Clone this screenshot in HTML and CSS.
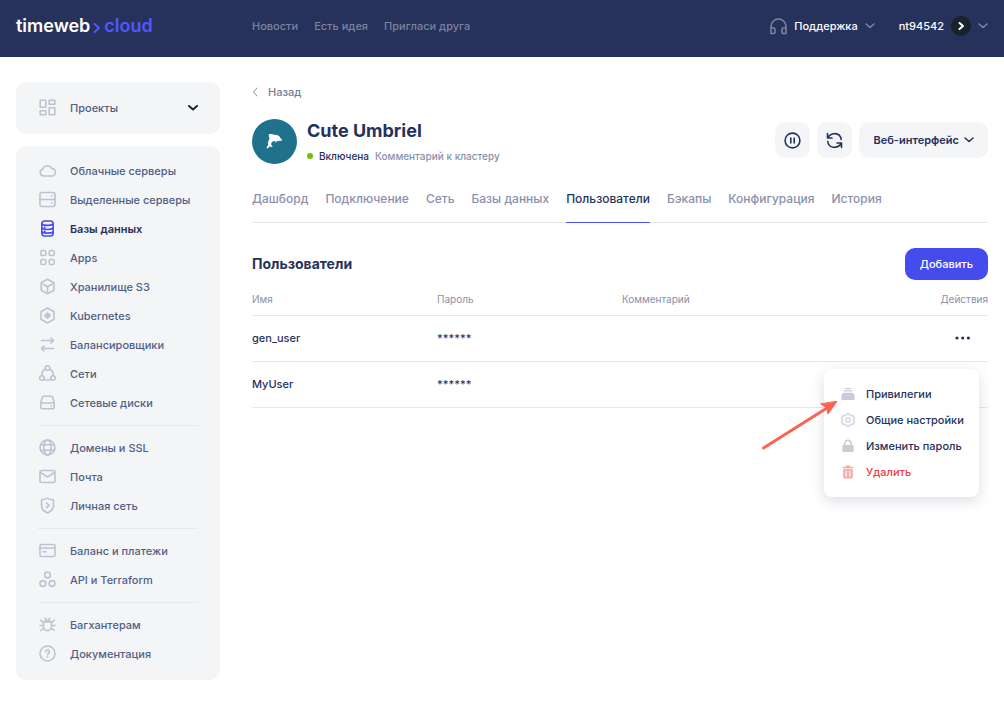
FILE: index.html
```html
<!DOCTYPE html>
<html lang="ru">
<head>
<meta charset="utf-8">
<meta name="viewport" content="width=device-width, initial-scale=1">
<title>Cute Umbriel — Пользователи</title>
<link rel="stylesheet" href="styles.css">
</head>
<body>
<header class="topbar">
  <a class="logo" href="#" aria-label="timeweb cloud"><span>timeweb</span><svg class="logo-mark" viewBox="0 0 8 12"><path d="M1.500 2l4.500 4-4.500 4"/></svg><span class="logo-accent">cloud</span></a>
  <nav class="topnav">
    <a href="#">Новости</a>
    <a href="#">Есть идея</a>
    <a href="#">Пригласи друга</a>
  </nav>
  <div class="account">
    <button class="top-button" type="button">
      <svg class="icon icon-dim" viewBox="0 0 17 17"><path d="M1 15.500V8.500a7.500 7.500 0 0 1 15 0v7M1 15.500h2.500a1.500 1.500 0 0 0 1.500-1.500v-2.500a1.500 1.500 0 0 0-1.500-1.500H1M16 15.500h-2.500a1.500 1.500 0 0 1-1.500-1.500v-2.500a1.500 1.500 0 0 1 1.500-1.500H16"/></svg>
      <span>Поддержка</span>
      <svg class="chevron icon-dim" viewBox="0 0 10 6"><path d="M1 1l4 3.500 4-3.500"/></svg>
    </button>
    <button class="top-button" type="button">
      <span>nt94542</span>
      <span class="avatar"><svg viewBox="0 0 20 20"><path d="M8.500 7l3.500 3-3.500 3"/></svg></span>
      <svg class="chevron icon-dim" viewBox="0 0 10 6"><path d="M1 1l4 3.500 4-3.500"/></svg>
    </button>
  </div>
</header>

<div class="layout">
  <aside class="sidebar">
    <button class="projects" type="button">
      <svg class="icon" viewBox="0 0 17 17"><path d="M1.200 1.200h5.600v7H1.200zM10.200 1.200h5.600v4h-5.600zM1.200 11.800h5.600v4H1.200zM10.200 8.800h5.600v7h-5.600z"/></svg>
      <span>Проекты</span>
      <svg class="chevron chevron-dark" viewBox="0 0 10 6"><path d="M1 1l4 3.500 4-3.500"/></svg>
    </button>
    <nav class="menu">
      <ul>
        <li><a href="#"><svg class="icon" viewBox="0 0 17 17"><path d="M4.500 14a3.400 3.400 0 0 1-.7-6.700 4.700 4.700 0 0 1 8.900-.7 3.700 3.700 0 0 1 .1 7.400z"/></svg>Облачные серверы</a></li>
        <li><a href="#"><svg class="icon" viewBox="0 0 17 17"><rect x="1" y="1.500" width="15" height="14" rx="2"/><path d="M1 8.500h15M12.500 5h.5M12.500 12h.5"/></svg>Выделенные серверы</a></li>
        <li><a class="active" href="#" aria-current="page"><svg class="icon" viewBox="0 0 17 17"><rect x="2.800" y="1" width="11.400" height="15" rx="3"/><path d="M2.800 4.200c2.500 1.500 9 1.500 11.400 0M2.800 8.300c2.500 1.500 9 1.500 11.400 0M2.800 12c2.500 1.500 9 1.500 11.400 0M5.500 7.300h.5M5.500 11.200h.5"/></svg>Базы данных</a></li>
        <li><a href="#"><svg class="icon" viewBox="0 0 17 17"><rect x="1.800" y="1.500" width="5" height="5" rx="1.500"/><rect x="10.200" y="1.500" width="5" height="5" rx="1.500"/><rect x="1.800" y="10.500" width="5" height="5" rx="1.500"/><rect x="10.200" y="10.500" width="5" height="5" rx="1.500"/></svg>Apps</a></li>
        <li><a href="#"><svg class="icon" viewBox="0 0 17 17"><path d="M8.500 1.200l6.300 3.500v7.600l-6.300 3.500-6.300-3.500V4.700zM4 6.200l4.500 2.500L13 6.200M8.500 8.700v5"/></svg>Хранилище S3</a></li>
        <li><a href="#"><svg class="icon" viewBox="0 0 17 17"><path d="M8.500 1l6.500 3.700v7.600L8.500 16 2 12.300V4.700z"/><path class="solid" d="M8.500 4.500l1.200 1.900 1.600-.2-.2 1.500 1.400.8-1.400.8.2 1.500-1.600-.2-1.200 1.900-1.200-1.900-1.600.2.200-1.500-1.400-.8 1.400-.8-.2-1.500 1.600.2z"/></svg>Kubernetes</a></li>
        <li><a href="#"><svg class="icon" viewBox="0 0 17 17"><path d="M2.500 4.500h12M12 2l2.500 2.500L12 7M14.500 12.500h-12M5 10l-2.500 2.500L5 15"/></svg>Балансировщики</a></li>
        <li><a href="#"><svg class="icon" viewBox="0 0 17 17"><circle cx="8.500" cy="3" r="2.300"/><circle cx="2.900" cy="13" r="2.300"/><circle cx="14.100" cy="13" r="2.300"/><path d="M6.300 4C4 5.200 2.800 7.500 2.700 10.500M10.700 4c2.300 1.200 3.500 3.500 3.600 6.500M5.200 14.200c2 1.300 4.600 1.300 6.600 0"/></svg>Сети</a></li>
        <li><a href="#"><svg class="icon" viewBox="0 0 17 17"><path d="M1.800 9l1.400-5.500c.2-.8.800-1.200 1.600-1.200h7.400c.8 0 1.400.4 1.600 1.200L15.200 9v4c0 1-.7 1.700-1.700 1.700h-10c-1 0-1.700-.7-1.700-1.700zM1.800 9h13.400M12 11.900h.5"/></svg>Сетевые диски</a></li>
      </ul>
      <ul>
        <li><a href="#"><svg class="icon" viewBox="0 0 17 17"><circle cx="8.500" cy="8.500" r="7.500"/><ellipse cx="8.500" cy="8.500" rx="3.700" ry="7.500"/><path d="M1.800 5.800h13.400M1.800 11.200h13.400"/></svg>Домены и SSL</a></li>
        <li><a href="#"><svg class="icon" viewBox="0 0 17 17"><rect x="1" y="2.500" width="15" height="12" rx="1.500"/><path d="M1.500 4.500l7 4.500 7-4.500"/></svg>Почта</a></li>
        <li><a href="#"><svg class="icon" viewBox="0 0 17 17"><path d="M8.500 1c1.500 1.200 3.700 1.700 6 1.700v6c0 3.300-2.500 5.800-6 7.300-3.500-1.500-6-4-6-7.300v-6c2.300 0 4.500-.5 6-1.700zM7.500 6l2.500 2.300-2.500 2.300"/></svg>Личная сеть</a></li>
      </ul>
      <ul>
        <li><a href="#"><svg class="icon" viewBox="0 0 17 17"><rect x="1" y="2.500" width="15" height="12" rx="1.500"/><path d="M1 6h15M4 9.800h3"/></svg>Баланс и платежи</a></li>
        <li><a href="#"><svg class="icon" viewBox="0 0 17 17"><circle cx="8.500" cy="4" r="2.900"/><circle cx="3.900" cy="12.500" r="2.900"/><circle cx="13.100" cy="12.500" r="2.900"/></svg>API и Terraform</a></li>
      </ul>
      <ul>
        <li><a href="#"><svg class="icon" viewBox="0 0 17 17"><path d="M4.500 6h8v4.500a4 4 0 0 1-8 0zM6 6a2.500 2 0 0 1 5 0M6.200 2l.8 2M10.800 2L10 4M4.500 7L1.800 4M12.500 7l2.700-3M4.500 9.500H1M12.500 9.500H16M4.800 12l-3 2.500M12.200 12l3 2.500"/></svg>Багхантерам</a></li>
        <li><a href="#"><svg class="icon" viewBox="0 0 17 17"><circle cx="8.500" cy="8.500" r="7.500"/><path d="M6.600 7a1.900 1.900 0 1 1 2.700 1.700c-.6.300-.8.500-.8 1.100M8.500 11.800v.4"/></svg>Документация</a></li>
      </ul>
    </nav>
  </aside>

  <main class="content">
    <a class="back" href="#"><svg viewBox="0 0 6 10"><path d="M5 1L1.500 5 5 9"/></svg>Назад</a>

    <div class="cluster">
      <svg class="cluster-logo" viewBox="0 0 45 45"><circle cx="22.500" cy="22.500" r="22.500"/><path class="dolphin" d="M17 15.200c2-.3 4 0 5 .6 3.500-.3 5.700 1.200 6.500 3.400l1.600 1.600c.2.700-.4 1-1.200 1l-3.600.1-1.700 1.800-.4-1.700c-2.200 0-3.700.8-4 2.500-.1 1 .1 1.600.6 2.100l.9 1.300c-1.200.3-2.200.1-2.900-.6-.7 1.300-1.700 2-3.200 2.300 0-1.500.6-2.500 1.600-3.300-.5-2.300 0-4.600 1.500-6.700-.9-1.100-1.200-2.500-.7-4.400z"/></svg>
      <div class="cluster-info">
        <h1>Cute Umbriel</h1>
        <p class="status"><span class="dot"></span><span class="state">Включена</span><span>Комментарий к кластеру</span></p>
      </div>
      <div class="cluster-actions">
        <button class="soft square" type="button" aria-label="Приостановить"><svg class="icon" viewBox="0 0 17 17"><circle cx="8.500" cy="8.500" r="7.400"/><path d="M6.800 6v5M10.200 6v5"/></svg></button>
        <button class="soft square" type="button" aria-label="Перезагрузить"><svg class="icon" viewBox="0 0 17 17"><path d="M1.500 1.500v4.500H6M2 5.500C4.500.8 12 .2 14.500 5c.4.700.6 1.500.7 2.500M15.500 15.500V11H11M15 11.500c-2.500 4.700-10 5.300-12.500.5-.4-.7-.6-1.500-.7-2.500"/></svg></button>
        <button class="soft" type="button">Веб-интерфейс<svg class="chevron" viewBox="0 0 10 6"><path d="M1 1l4 3.500 4-3.500"/></svg></button>
      </div>
    </div>

    <nav class="tabs">
      <a href="#">Дашборд</a>
      <a href="#">Подключение</a>
      <a href="#">Сеть</a>
      <a href="#">Базы данных</a>
      <a class="active" href="#" aria-current="page">Пользователи</a>
      <a href="#">Бэкапы</a>
      <a href="#">Конфигурация</a>
      <a href="#">История</a>
    </nav>

    <div class="section-head">
      <h2>Пользователи</h2>
      <button class="primary" type="button">Добавить</button>
    </div>

    <table class="users">
      <thead>
        <tr><th class="col-name">Имя</th><th class="col-password">Пароль</th><th>Комментарий</th><th class="col-actions">Действия</th></tr>
      </thead>
      <tbody>
        <tr>
          <td>gen_user</td><td>******</td><td></td>
          <td class="col-actions">
            <div class="row-actions">
              <button class="more" type="button" aria-label="Действия" aria-expanded="true"><svg viewBox="0 0 16 4"><circle cx="2" cy="2" r="1.600"/><circle cx="7.700" cy="2" r="1.600"/><circle cx="13.400" cy="2" r="1.600"/></svg></button>
              <div class="dropdown">
                <button type="button"><svg viewBox="0 0 14 14"><path d="M4 1h6v1.200H4zM2.500 3.300h9v1.200h-9zM2.300 5.700h9.400L13.500 8v4c0 .6-.4 1-1 1h-11c-.6 0-1-.4-1-1V8z"/></svg>Привилегии</button>
                <button type="button"><svg class="line" viewBox="0 0 14 14"><path d="M5.500.8h3l.6 1.500 1.300.7 1.600-.3 1.500 2.600-1 1.200v1l1 1.200-1.500 2.600-1.600-.3-1.300.7-.6 1.500h-3l-.6-1.500-1.300-.7-1.600.3L.5 8.700l1-1.200v-1l-1-1.200L2 2.700l1.600.3 1.300-.7z"/><circle cx="7" cy="7" r="2.200"/></svg>Общие настройки</button>
                <button type="button"><svg viewBox="0 0 14 14"><path d="M3 6V4.500a4 4 0 0 1 8 0V6h.3c.8 0 1.400.6 1.400 1.400v4.200c0 .8-.6 1.400-1.400 1.400H2.700c-.8 0-1.400-.6-1.400-1.400V7.400C1.300 6.600 1.900 6 2.700 6zm1.500 0h5V4.500a2.500 2.500 0 0 0-5 0z"/></svg>Изменить пароль</button>
                <button class="danger" type="button"><svg viewBox="0 0 14 14"><path fill-rule="evenodd" d="M5.500.500h3l.8 1.200h3v1.600H1.700V1.700h3zM2.200 4h9.600v8c0 .9-.6 1.500-1.500 1.500H3.700c-.9 0-1.500-.6-1.500-1.500zM4.500 5.300v6.500h1.200V5.300zM8.300 5.300v6.500h1.200V5.300z"/></svg>Удалить</button>
              </div>
              <svg class="pointer" viewBox="0 0 76 50"><path class="shaft" d="M2.500 48L66 8"/><path class="head" d="M76 1.500L67 14 65.500 8 60 4z"/></svg>
            </div>
          </td>
        </tr>
        <tr><td>MyUser</td><td>******</td><td></td><td></td></tr>
      </tbody>
    </table>
  </main>
</div>
</body>
</html>
```
FILE: styles.css
```css
:root {
  --navy: #26325b;
  --slate: #515f85;
  --muted: #8a90aa;
  --icon: #bfc2d1;
  --soft: #f4f5f7;
  --line: #e7e8ee;
  --blue: #444cee;
}

* { box-sizing: border-box; }

body {
  margin: 0;
  background: #fff;
  color: var(--navy);
  font: 500 11px/16px Inter, "Noto Sans", sans-serif;
}

a { color: inherit; text-decoration: none; }

button {
  border: 0;
  padding: 0;
  background: none;
  color: inherit;
  font: inherit;
  cursor: pointer;
}

svg {
  flex: none;
  fill: none;
  stroke: currentColor;
  stroke-linecap: round;
  stroke-linejoin: round;
}

ul { margin: 0; padding: 0; list-style: none; }
h1, h2, p { margin: 0; }

.icon { width: 17px; height: 17px; stroke-width: 1.6; }
.chevron { width: 10px; height: 6px; stroke-width: 1.6; }
.solid { fill: currentColor; stroke: none; }

.topbar {
  display: flex;
  align-items: center;
  height: 57px;
  padding: 0 16px 5px;
  background: var(--navy);
  color: #fff;
}

.logo {
  display: flex;
  align-items: center;
  width: 236px;
  font-size: 18px;
  font-weight: 600;
  line-height: 24px;
}
.logo-mark { width: 8px; height: 12px; margin: 3px 3px 0; stroke: #5157ff; stroke-width: 2; }
.logo-accent { color: #5157ff; }

.topnav { display: flex; gap: 16px; color: #7c839d; }

.account { display: flex; gap: 24px; margin-left: auto; }
.top-button { display: flex; align-items: center; gap: 7px; }
.icon-dim { color: #7c839d; }
.avatar { display: flex; width: 20px; height: 20px; border-radius: 50%; background: #18222d; }
.avatar svg { width: 20px; height: 20px; stroke-width: 2; }

.layout { display: flex; gap: 32px; padding: 25px 16px; }

.sidebar { flex: none; width: 204px; color: var(--slate); }
.sidebar .icon { color: var(--icon); }

.projects {
  display: flex;
  align-items: center;
  gap: 14px;
  width: 100%;
  padding: 17px 22px 18px 23px;
  border-radius: 10px;
  background: var(--soft);
}
.sidebar .chevron-dark { margin-left: auto; color: #22252e; stroke-width: 2; }

.menu { margin-top: 12px; padding: 10px 22px 12px; border-radius: 10px; background: var(--soft); }
.menu ul + ul { margin-top: 8px; padding-top: 7px; border-top: 1px solid var(--line); }
.menu a { display: flex; align-items: center; gap: 14px; padding: 6px 0 6px 1px; white-space: nowrap; }
.menu .active { color: var(--navy); font-weight: 600; }
.menu .active .icon { color: var(--blue); }

.content { flex: 1; min-width: 0; }

.back { display: flex; align-items: center; gap: 10px; padding-top: 2px; color: #747d9a; }
.back svg { width: 6px; height: 10px; color: var(--muted); }

.cluster { display: flex; align-items: center; gap: 10px; margin-top: 19px; }
.cluster-logo { width: 45px; height: 45px; stroke: none; fill: #20718c; }
.dolphin { fill: #fff; }
.cluster h1 { font-size: 18px; font-weight: 700; line-height: 24px; }
.status { display: flex; align-items: center; gap: 6px; margin-top: 5px; color: var(--muted); font-size: 10px; }
.state { color: var(--navy); }
.dot { width: 6px; height: 6px; border-radius: 50%; background: #6cc20b; }

.cluster-actions { display: flex; gap: 7px; margin-left: auto; padding-bottom: 3px; }
.soft {
  display: flex;
  align-items: center;
  justify-content: center;
  gap: 5px;
  height: 36px;
  padding: 0 14px;
  border-radius: 10px;
  background: var(--soft);
  font-weight: 600;
}
.square { width: 35px; padding: 0; }

.tabs {
  display: flex;
  gap: 17px;
  margin-top: 25px;
  border-bottom: 1px solid var(--line);
  color: var(--muted);
  font-size: 12px;
}
.tabs a { margin-bottom: -1px; padding: 2px 0 15px; border-bottom: 1px solid transparent; }
.tabs .active { border-color: var(--blue); color: var(--navy); }

.section-head { display: flex; align-items: center; justify-content: space-between; margin-top: 25px; }
.section-head h2 { font-size: 14px; font-weight: 700; line-height: 20px; }
.primary { height: 32px; padding: 0 15px; border-radius: 10px; background: var(--blue); color: #fff; }

.users { width: 100%; margin-top: 3px; border-collapse: collapse; table-layout: fixed; }
.users th { height: 32px; padding: 0; color: var(--muted); font-size: 10px; font-weight: 400; text-align: left; }
.users td { height: 46px; padding: 0; }
.users tr { border-bottom: 1px solid var(--line); }
.users .col-name, .users .col-password { width: 185px; }
.users .col-actions { text-align: right; }

.row-actions { position: relative; display: flex; justify-content: flex-end; padding-right: 17px; }
.more { display: flex; align-items: center; height: 16px; }
.more svg { width: 16px; height: 4px; fill: currentColor; stroke: none; }

.dropdown {
  position: absolute;
  z-index: 1;
  top: 39px;
  right: 9px;
  width: 155px;
  padding: 12px 0;
  border-radius: 8px;
  background: #fff;
  box-shadow: 0 4px 14px rgb(38 50 91 / 16%);
}
.dropdown button { display: flex; align-items: center; gap: 11px; width: 100%; padding: 5px 17px; white-space: nowrap; }
.dropdown svg { width: 14px; height: 14px; fill: #c9ccd9; stroke: none; }
.dropdown .line { fill: none; stroke: #c9ccd9; stroke-width: 1.2; }
.dropdown .danger { color: #ee4036; }
.dropdown .danger svg { fill: #f6aaa5; }

.pointer { position: absolute; z-index: 2; top: 70px; right: 151px; width: 76px; height: 50px; }
.shaft { stroke: #f96554; stroke-width: 3; }
.head { fill: #f96554; stroke: #f96554; }
```
